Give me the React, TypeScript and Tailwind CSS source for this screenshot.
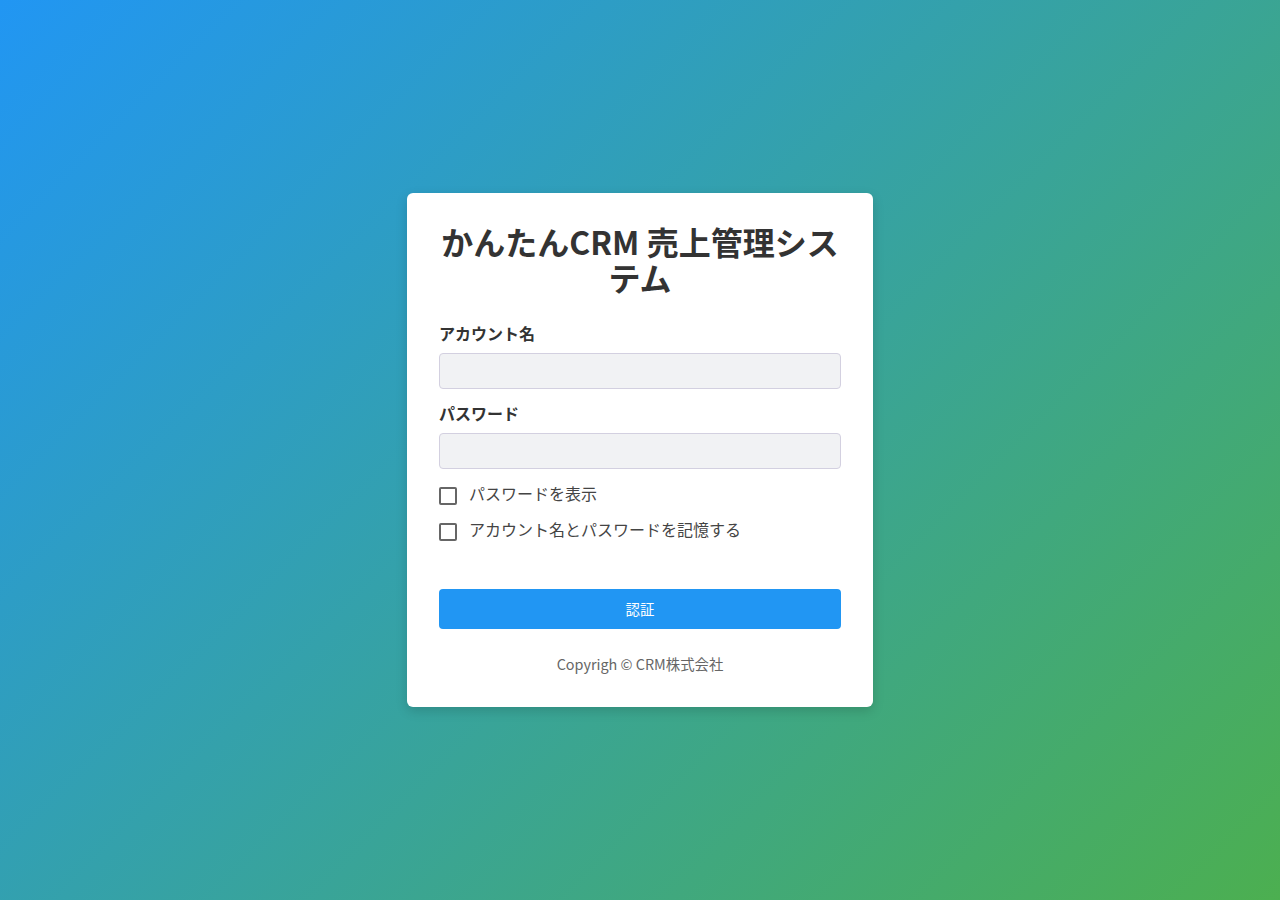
import React from "react";

export default function App() {
  return (
    <div
      className="min-h-screen w-full flex items-center justify-center bg-[linear-gradient(135deg,#2196f3,#4caf50)]"
      style={{ fontFamily: '"Noto Sans CJK JP", "Noto Sans", sans-serif' }}
    >
      <div className="w-[466px] bg-white rounded-md shadow-[0_4px_12px_rgba(0,0,0,0.15)] px-8 pt-[30px] pb-[33px]">
        <h1 className="text-[32px] leading-[36px] font-bold text-[#333] text-center">
          かんたんCRM 売上管理システム
        </h1>
        <label className="block mt-[26px] text-[16px] leading-[24px] font-bold text-[#333]">
          アカウント名
        </label>
        <input
          type="text"
          className="block mt-2 w-full h-9 rounded bg-[#f1f2f4] border border-[#d3d0e0] outline-none px-3"
        />
        <label className="block mt-3 text-[16px] leading-[24px] font-bold text-[#333]">
          パスワード
        </label>
        <input
          type="password"
          className="block mt-2 w-full h-9 rounded bg-[#f1f2f4] border border-[#d3d0e0] outline-none px-3"
        />
        <div className="mt-3 flex flex-col gap-3">
          <label className="flex items-start h-6 text-[16px] leading-[24px] text-[#444]">
            <span className="w-[18px] h-[18px] border-2 border-[#666] rounded-[2px] mt-[6px] mr-3 shrink-0" />
            パスワードを表示
          </label>
          <label className="flex items-start h-6 text-[16px] leading-[24px] text-[#444]">
            <span className="w-[18px] h-[18px] border-2 border-[#666] rounded-[2px] mt-[6px] mr-3 shrink-0" />
            アカウント名とパスワードを記憶する
          </label>
        </div>
        <button className="mt-12 w-full h-10 rounded bg-[#2196f3] text-white text-[14.4px]">
          認証
        </button>
        <p className="mt-6 text-center text-[14.4px] leading-[21px] text-[#666]">
          Copyrigh © CRM株式会社
        </p>
      </div>
    </div>
  );
}
